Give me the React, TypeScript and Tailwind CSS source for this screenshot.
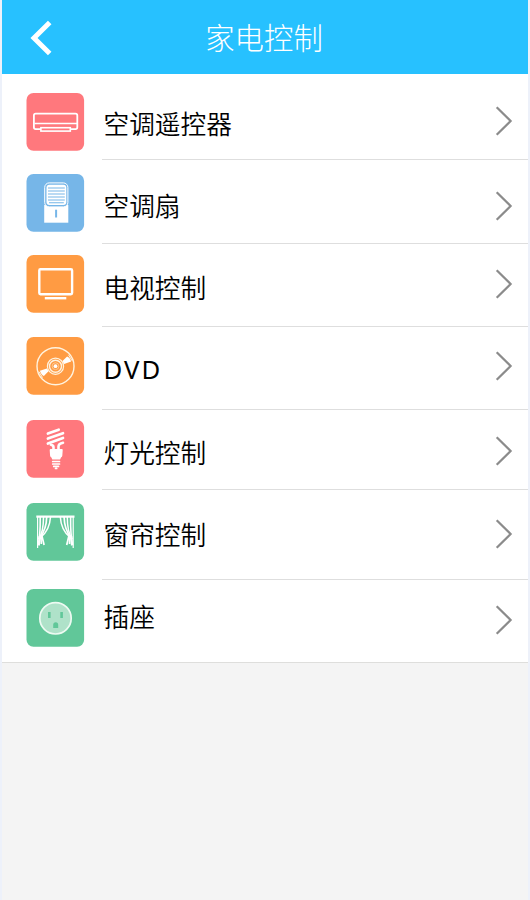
import React from "react";

const AirConditioner = () => (
  <g fill="none" stroke="#fff" strokeWidth="1.8">
    <rect x="7.4" y="20.6" width="43.4" height="15.5" rx="1.8" />
    <path d="M8 30.6H50.5" strokeWidth="1.5" />
    <rect x="14.4" y="34.7" width="29.4" height="3.4" fill="#ff787d" strokeWidth="1.6" />
  </g>
);

const Fan = () => (
  <g>
    <path d="M17.7 31H41.8V48.7H17.7Z" fill="#fff" />
    <rect x="18.2" y="8.9" width="23.2" height="24" rx="4.5" fill="#76b6e8" stroke="#fff" strokeWidth="1" />
    <rect x="20" y="10.7" width="19.8" height="20.4" rx="3" fill="#fff" />
    <path d="M21.5 14H38.3M21.5 17H38.3M21.5 20H38.3M21.5 23H38.3M21.5 26H38.3M22.5 28.8H37.3" stroke="#76b6e8" strokeWidth="1.1" />
    <path d="M29.6 35.7V43.5" stroke="#76b6e8" strokeWidth="2" />
  </g>
);

const Television = () => (
  <g fill="none" stroke="#fff" strokeWidth="2.4">
    <rect x="12.8" y="14.2" width="32.8" height="25" rx="1.2" />
    <path d="M18.3 43.2H39.8" strokeWidth="2.4" />
  </g>
);

const Disc = () => (
  <g fill="none" stroke="#fff3df">
    <circle cx="29" cy="29.2" r="18.5" strokeWidth="1.4" />
    <circle cx="29" cy="29.2" r="8.1" strokeWidth="1.2" />
    <circle cx="29" cy="29.2" r="6" strokeWidth="1.4" />
    <circle cx="29" cy="29.2" r="3.4" strokeWidth="0.9" stroke="#ffce98" />
    <circle cx="29" cy="29.2" r="1.9" fill="#fff" stroke="none" />
    <path d="M36 24.1L40.6 19.4Q43.5 20.5 44.6 24.6L37.6 27ZM22 34.3L17.4 39Q14.5 37.9 13.4 33.8L20.4 31.4Z" fill="#fff" stroke="none" />
    <path d="M42 17.8L45.6 23.8M16 40.6L12.4 34.6" strokeWidth="1" />
  </g>
);

const Bulb = () => (
  <g fill="none" stroke="#fff" strokeLinecap="round">
    <path d="M21.4 13.6L32.2 9.7M21.4 18.6L36.5 13.2M21.4 23.5L36.5 18" strokeWidth="2.7" />
    <path d="M27 30V27.2Q27 25.1 24.4 24.7M32 30V26.6Q32 23.7 36.5 22.8" strokeWidth="2.6" />
    <path d="M24.3 29H35.3Q36.4 29 36.2 30.2L35.8 35.8Q35.7 36.8 34.5 37.6L33.6 39.5H25.8L24.9 37.6Q23.7 36.8 23.6 35.8L23.2 30.2Q23.1 29 24.3 29Z" fill="#fff" stroke="none" />
    <path d="M26.2 41.5H33M26.2 44H33M27.2 46.4H32M29 48.4H30.2" strokeWidth="1.7" />
  </g>
);

const CurtainHalf = () => (
  <g fill="none" stroke="#fff">
    <path d="M11.1 14V45" strokeWidth="1.2" />
    <path d="M13.7 14C13.8 25 13.8 33 11.7 42" strokeWidth="1.6" />
    <path d="M17 14C17 24 16 31 12 36" strokeWidth="1.5" />
    <path d="M20.2 14C20 24 17 30 13.4 35" strokeWidth="1.7" />
    <path d="M24 14C23.3 25 19.5 30 14.5 34" strokeWidth="1.5" />
    <path d="M12.8 33L12.6 42.5M14.3 33.2L14.8 41M15.2 32L17.6 42" strokeWidth="1.7" />
  </g>
);

const Curtains = () => (
  <g>
    <path d="M9.8 13.6H48" stroke="#fff" strokeWidth="2.4" />
    <CurtainHalf />
    <g transform="translate(57.8 0) scale(-1 1)">
      <CurtainHalf />
    </g>
  </g>
);

const Socket = () => (
  <g>
    <circle cx="29" cy="29.3" r="15.7" fill="#afe2c9" stroke="#edfaf2" strokeWidth="1.7" />
    <path d="M21.5 23H24.1V29H21.5ZM33.8 23H36.4V29H33.8ZM26.7 39V35.8Q26.7 33.3 29.2 33.3Q31.7 33.3 31.7 35.8V39Z" fill="#61c799" />
  </g>
);

type Device = {
  name: string;
  color: string;
  Icon: () => React.ReactElement;
  row: string;
  icon: string;
  label: string;
  arrow: string;
};

const devices: Device[] = [
  { name: "空调遥控器", color: "#ff787d", Icon: AirConditioner, row: "h-[86px]", icon: "mt-[19px]", label: "mt-[31px] font-[350]", arrow: "mt-[32px]" },
  { name: "空调扇", color: "#76b6e8", Icon: Fan, row: "h-[84px]", icon: "mt-[14px]", label: "mt-[27px] font-[350]", arrow: "mt-[31px]" },
  { name: "电视控制", color: "#ff9b43", Icon: Television, row: "h-[83px]", icon: "mt-[11px]", label: "mt-[25px] font-[350]", arrow: "mt-[25px]" },
  { name: "DVD", color: "#ff9b43", Icon: Disc, row: "h-[83px]", icon: "mt-[10px]", label: "mt-[25px] font-['Noto_Sans',sans-serif] font-normal tracking-[2px]", arrow: "mt-[24px]" },
  { name: "灯光控制", color: "#ff787d", Icon: Bulb, row: "h-[80px]", icon: "mt-[10px]", label: "mt-[24px] font-[350]", arrow: "mt-[26px]" },
  { name: "窗帘控制", color: "#61c799", Icon: Curtains, row: "h-[90px]", icon: "mt-[13px]", label: "mt-[26px] font-[350]", arrow: "mt-[29px]" },
  { name: "插座", color: "#61c799", Icon: Socket, row: "h-[83px]", icon: "mt-[9px]", label: "mt-[18px] font-[350]", arrow: "mt-[25px]" },
];

function DeviceRow({ device, last }: { device: Device; last: boolean }) {
  const { Icon } = device;
  return (
    <li className={`flex bg-white pl-6 ${device.row} ${last ? "border-b border-[#dededc]" : ""}`}>
      <svg className={`h-[58px] w-[59px] shrink-0 ${device.icon}`} viewBox="-0.5 0 59 58">
        <rect width="57.6" height="57.8" rx="7" fill={device.color} />
        <Icon />
      </svg>
      <div className={`ml-[17px] flex flex-1 items-start justify-between pr-[15px] ${last ? "" : "border-b border-[#dedede]"}`}>
        <span className={`ml-[1.5px] text-[25.7px] leading-9 text-black ${device.label}`}>{device.name}</span>
        <svg className={`h-[30px] w-[18px] ${device.arrow}`} viewBox="0 0 18 30" fill="none" stroke="#8b8b8b" strokeWidth="2.2">
          <path d="M1.7 1.2L15.6 15L1.7 28.8" />
        </svg>
      </div>
    </li>
  );
}

export default function App() {
  return (
    <main className="flex h-[900px] w-full flex-col border-x-2 border-[#edf1fa] bg-[#f4f4f4] font-['Noto_Sans_CJK_SC',sans-serif]">
      <header className="grid h-[74px] shrink-0 grid-cols-[80px_1fr_80px] items-center bg-[#27c1ff]">
        <svg className="ml-[28px] mt-[2px] h-[36px] w-[24px]" viewBox="0 0 24 36" fill="none" stroke="#fff" strokeWidth="5">
          <path d="M19.7 2.4L4 18L19.7 33.6" />
        </svg>
        <h1 className="mb-[2px] mr-[2px] text-center text-[29.4px] font-light leading-10 text-white">家电控制</h1>
      </header>
      <ul>
        {devices.map((device, i) => (
          <DeviceRow key={device.name} device={device} last={i === devices.length - 1} />
        ))}
      </ul>
    </main>
  );
}
